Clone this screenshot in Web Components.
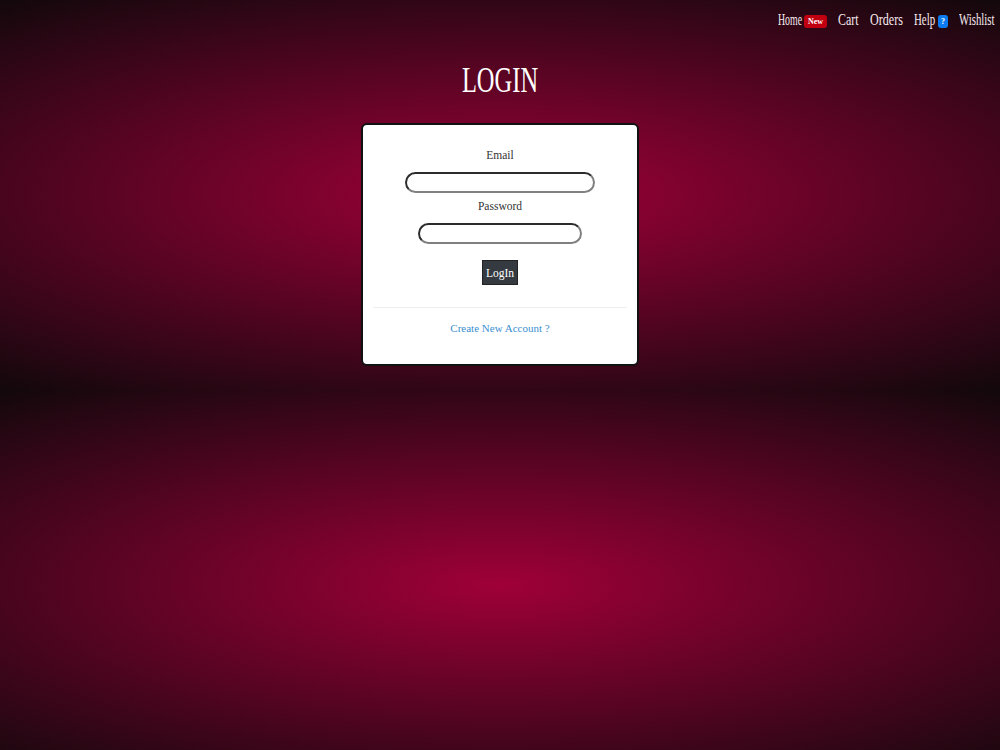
<!DOCTYPE html>
<html lang="en"><head><meta charset="utf-8"><title>Login</title>
<style>html,body{margin:0;padding:0;background:#111}</style></head>
<body>
<x-page>
  <x-nav>
    <x-nav-link style="--w:24px;--sx:.58">Home<x-badge slot="badge" tone="red">New</x-badge></x-nav-link>
    <x-nav-link style="--w:21px;--sx:.7">Cart</x-nav-link>
    <x-nav-link style="--w:33px;--sx:.71">Orders</x-nav-link>
    <x-nav-link style="--w:21px;--sx:.64">Help<x-badge slot="badge" tone="blue">?</x-badge></x-nav-link>
    <x-nav-link style="--w:36px;--sx:.635">Wishlist</x-nav-link>
  </x-nav>
  <x-login></x-login>
</x-page>
<template id="t-login">
<style>
:host{display:block;font-family:"Liberation Serif",serif;color:#333}
h1{margin:0;height:83px;display:flex;align-items:center;justify-content:center;font:400 36px/1 "Liberation Serif",serif;color:#fff}
h1 span{display:inline-block;transform:translateY(-2px) scaleX(.68)}
.card{box-sizing:border-box;width:278px;height:243px;margin:0 auto;background:#fff;border:2px solid #111;border-radius:6px;padding:0 10px;display:flex;flex-direction:column;align-items:center;font-size:11.5px}
label{display:block;line-height:14px;text-align:center;color:#333}
.l1{margin-top:23px}
.l2{margin-top:6px}
input{display:block;box-sizing:border-box;height:21px;border:2px inset #808080;border-radius:11px;background:#fff;padding:0 8px;outline:0}
.i1{width:190px;margin-top:10px}
.i2{width:164px;margin-top:10px}
button{display:block;margin-top:16px;width:36px;height:25px;padding:0;background:#343a40;color:#fff;border:1px solid #222;font:11.5px "Liberation Serif",serif}
hr{width:254px;border:0;border-top:1px solid #eee;margin:22px 0 0}
a{display:block;margin-top:13px;color:#3a8fd0;text-decoration:none;line-height:14px;font-size:11px}
</style>
<h1><span>LOGIN</span></h1>
<div class="card">
  <label class="l1" for="e">Email</label>
  <input class="i1" id="e" type="email">
  <label class="l2" for="p">Password</label>
  <input class="i2" id="p" type="password">
  <button type="button">LogIn</button>
  <hr>
  <a href="#">Create New Account ?</a>
</div>
</template>
<script>
function def(name, css, html){
  customElements.define(name, class extends HTMLElement{
    connectedCallback(){
      if(this.shadowRoot) return;
      this.attachShadow({mode:"open"}).innerHTML="<style>"+css+"</style>"+html;
    }
  });
}
def("x-page",`:host{display:block;min-height:750px;overflow:hidden;box-sizing:border-box;
  background:radial-gradient(810px 248px at 50% 50%,#9f0038 0%,#12080c 100%) 0 0/100% 390px repeat-y}`,"<slot></slot>");
def("x-nav",`:host{display:flex;justify-content:flex-end;align-items:center;gap:11px;height:40px;padding-right:5px;box-sizing:border-box;font-family:"Liberation Serif",serif;color:#fff}`,"<slot></slot>");
def("x-nav-link",`:host{display:inline-flex;align-items:center;font-size:17px;color:#f6eaee}
.t{display:inline-block;width:var(--w)}
.s{display:inline-block;white-space:nowrap;transform:scaleX(var(--sx));transform-origin:0 50%}`,`<span class="t"><span class="s"><slot></slot></span></span><slot name="badge"></slot>`);
def("x-badge",`:host{display:inline-block;box-sizing:border-box;width:23px;height:13px;margin:3px 0 0 2px;border-radius:3px;font:700 8px/13px "Liberation Serif",serif;text-align:center;color:#fff;background:#c00010}
:host([tone=blue]){background:#0d7bf0;width:10px;margin-left:3px}`,"<slot></slot>");
customElements.define("x-login",class extends HTMLElement{
  connectedCallback(){
    if(this.shadowRoot) return;
    this.attachShadow({mode:"open"}).appendChild(document.getElementById("t-login").content.cloneNode(true));
  }
});
</script>
</body></html>
